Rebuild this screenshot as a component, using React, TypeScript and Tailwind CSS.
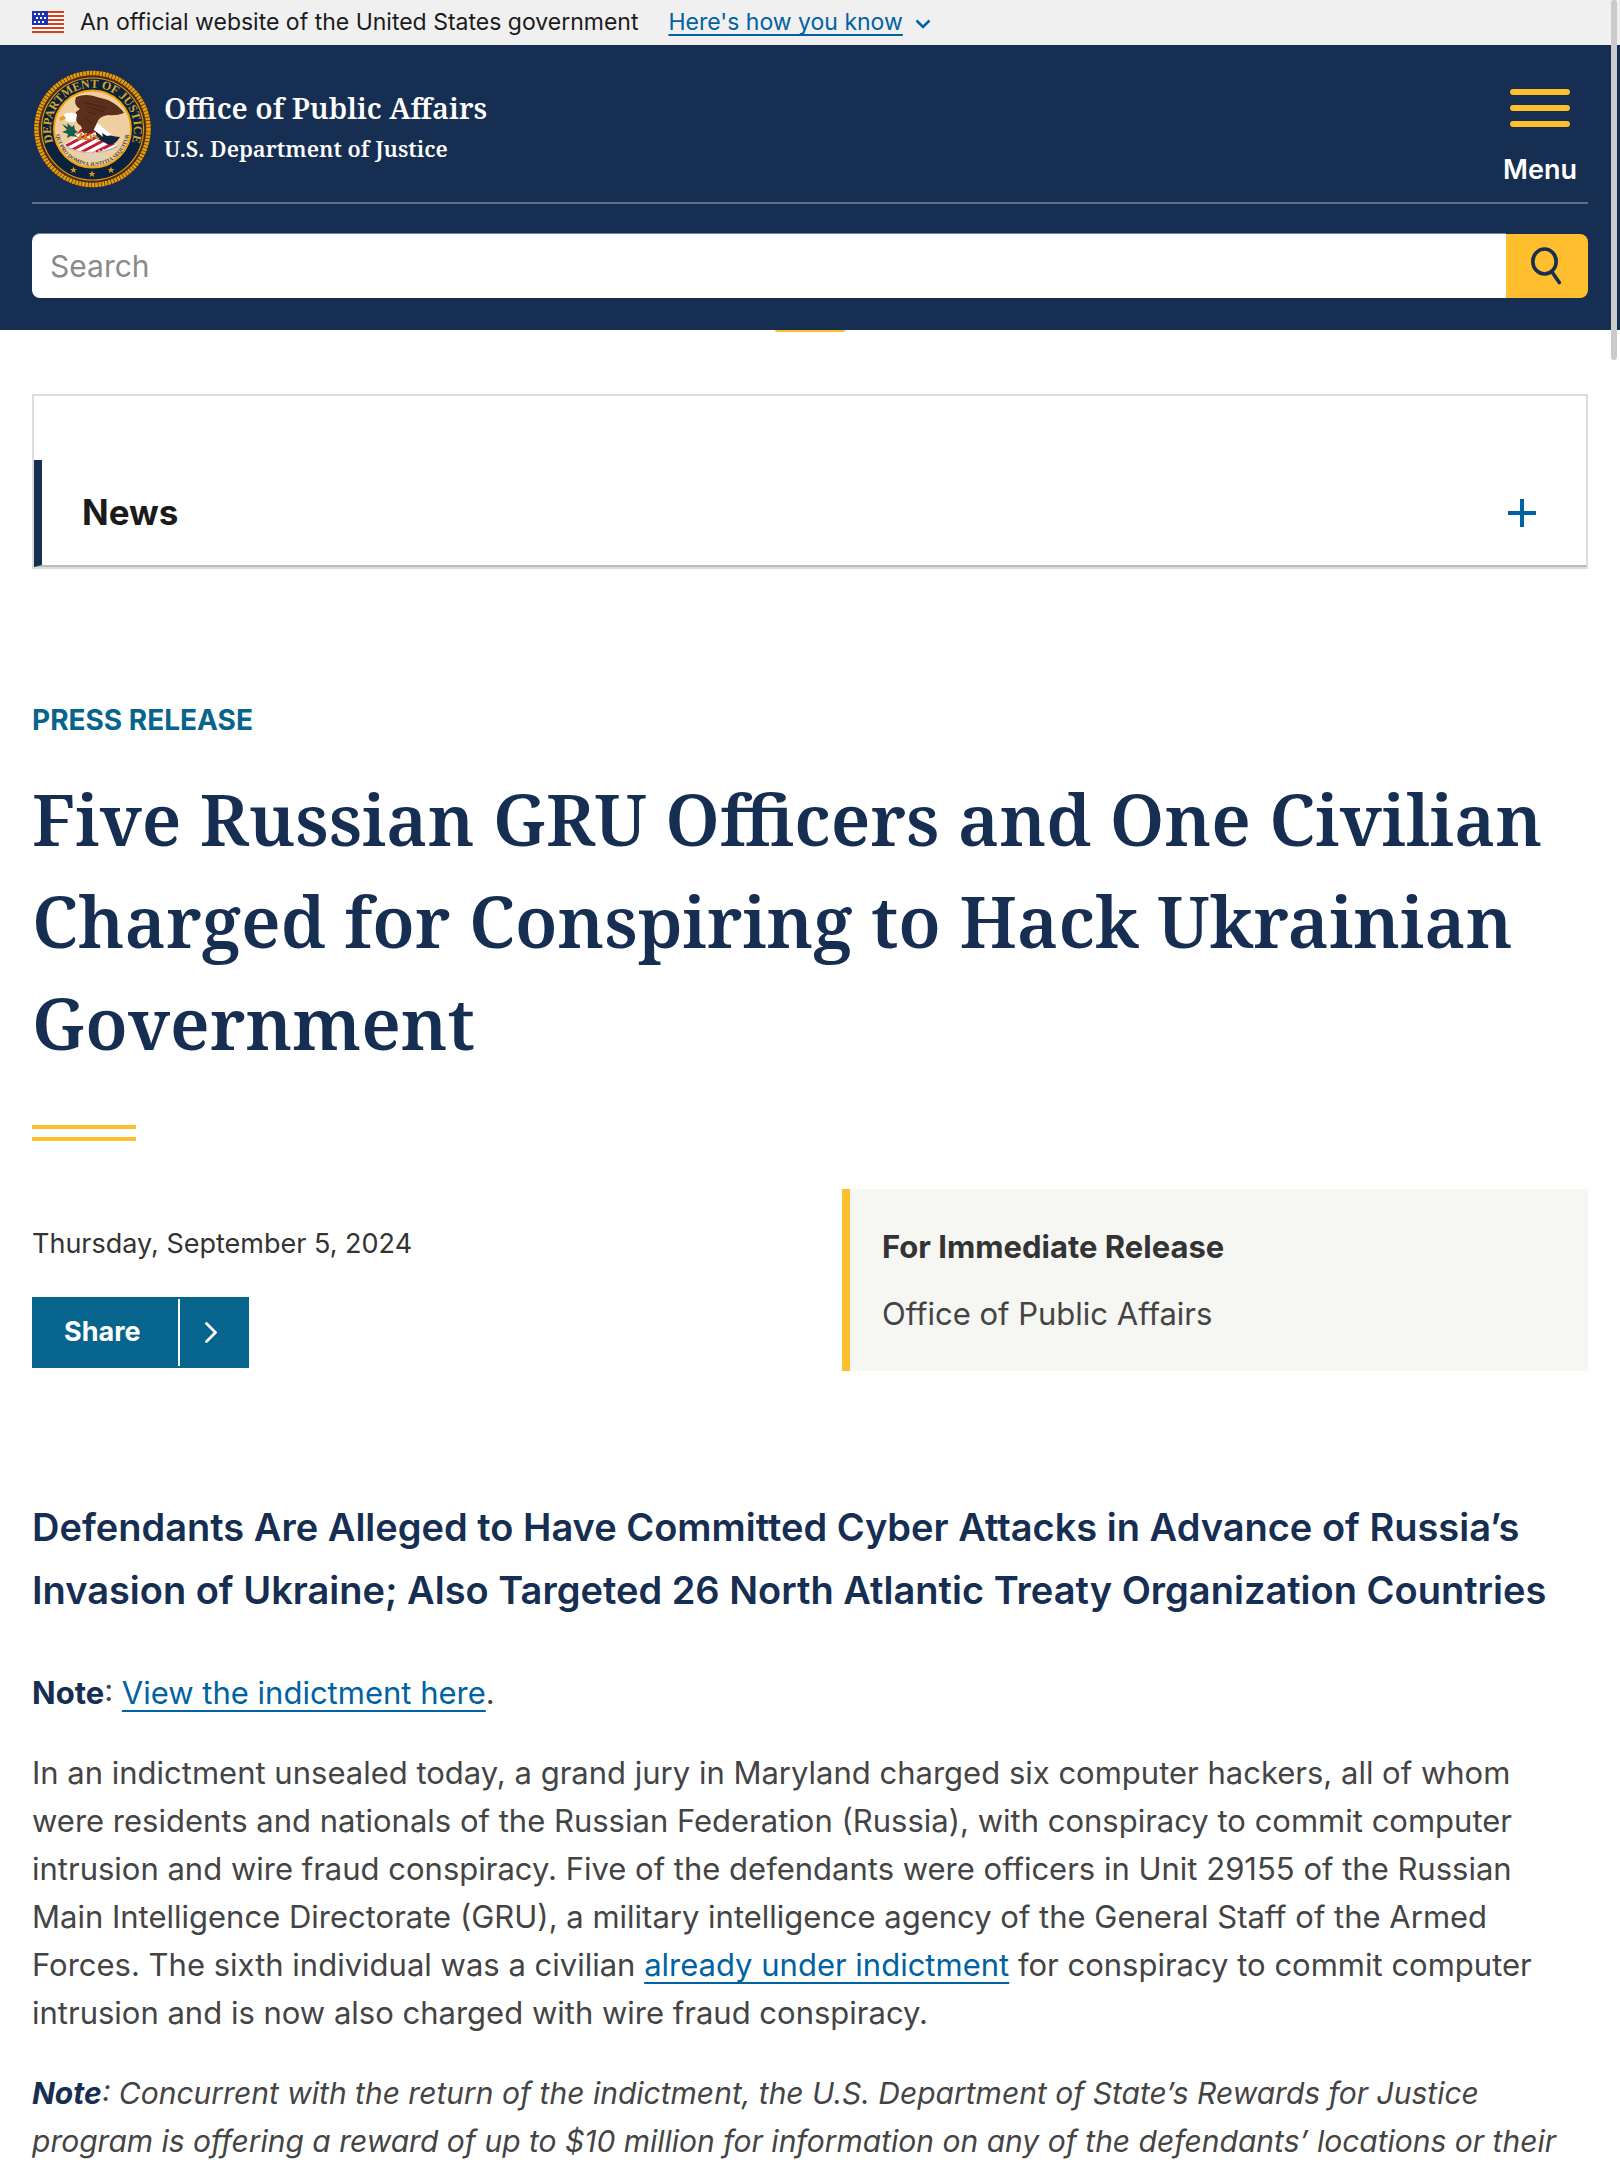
import type { ReactNode } from "react";

const NAVY = "#162e51";
const GOLD = "#ffbe2e";

function Flag() {
  const stripes = [0, 4, 8, 12, 16, 20];
  const stars = [
    [2, 2], [6, 2], [10, 2],
    [4, 6], [8, 6], [12, 6],
    [2, 10], [6, 10], [10, 10],
  ];
  return (
    <svg width="32" height="22" viewBox="0 0 32 22" shapeRendering="crispEdges" aria-hidden="true">
      <rect width="32" height="22" fill="#fff" />
      {stripes.map((y) => (
        <rect key={y} y={y} width="32" height="2" fill="#db3e1f" />
      ))}
      <rect width="16" height="14" fill="#1e33b1" />
      {stars.map(([x, y]) => (
        <rect key={`${x}-${y}`} x={x} y={y} width="2" height="2" fill="#fff" />
      ))}
    </svg>
  );
}

function Star({ x, y }: { x: number; y: number }) {
  return (
    <path
      transform={`translate(${x} ${y})`}
      d="M0-3.6 1-1.1 3.5-1.1 1.5.5 2.2 3 0 1.5-2.2 3-1.5.5-3.5-1.1-1-1.1Z"
      fill="#d9961a"
    />
  );
}

function Seal() {
  return (
    <svg width="120" height="120" viewBox="0 0 120 120" role="img" aria-label="Department of Justice seal">
      <defs>
        <path id="seal-outer" d="M30.8 89 A41.500 41.500 0 1 1 90.2 89" />
        <path id="seal-inner" d="M25 50 A36.900 36.900 0 1 0 96 50" />
        <clipPath id="seal-shield">
          <path d="M32 76 Q46 68 50 56 Q66 60 72 69 L85 76 Q74 85 56 83 Q41 82 32 76Z" />
        </clipPath>
      </defs>
      <circle cx="60.500" cy="60" r="58.500" fill="#4a2f1c" />
      <circle cx="60.500" cy="60" r="56" fill="none" stroke="#e89b08" strokeWidth="4.500" strokeDasharray="2.600 0.700" />
      <circle cx="60.500" cy="60" r="51" fill="#0b2140" stroke="#e0950c" strokeWidth="1.200" />
      <circle cx="60.500" cy="60" r="38.500" fill="#efcf9f" stroke="#f0a30a" strokeWidth="2" />
      <text fill="#d9a625" fontFamily="Liberation Serif, serif" fontSize="12">
        <textPath href="#seal-outer" startOffset="50%" textAnchor="middle">DEPARTMENT OF JUSTICE</textPath>
      </text>
      <g clipPath="url(#seal-shield)">
        <rect x="28" y="50" width="62" height="36" fill="#fff" />
        <g stroke="#c8193c" strokeWidth="3">
          <path d="M28 66 52 54M28 73 58 57M34 77 66 60M40 81 72 64M48 84 80 67M58 86 88 71" />
        </g>
      </g>
      <path d="M32 75Q56 92 87 76L84 79Q60 89 38 80Z" fill="#a9a9ad" />
      <g stroke="#d5d2cf" strokeWidth="1.600" fill="none">
        <path d="M55 83 53 90M59 82 58 92M63 82 64 93M67 81 69 92M71 80 74 89M54 87 74 90" />
      </g>
      <path d="M61 57Q68 66 88 68Q83 76 77 76L66 70Z" fill="#12233f" />
      <path d="M63 52Q70 58 80 66L75 67 70 64 71 68 62 61Z" fill="#fff" />
      <path d="M44 28Q54 24 65 28L76 31Q88 37 92 44Q84 47 76 46Q67 47 65 54L60 64 51 64 49 57Q42 53 44 43L48 40Q41 36 44 28Z" fill="#5a2f1b" />
      <path d="M51 33 74 39M54 37 72 43M56 43 64 45M53 49 60 55" stroke="#442013" strokeWidth="1" />
      <path d="M45 45Q36 42 31 46L28 50 33 51Q37 55 44 52Z" fill="#fff" />
      <path d="M32 46 27 49 28 52 34 50Z" fill="#e2a22c" />
      <path d="M30 55 36 58 35 54 40 58 42 56 43 61 46 63 42 65 46 68 39 67 35 69 36 65 30 63 35 61Z" fill="#15604a" />
      <path d="M50 64 46 71M53 64 54 71M58 65 60 71M61 66 67 70M45 69 57 70" stroke="#d28a18" strokeWidth="2.200" fill="none" />
      <text fill="#4c4335" fontFamily="Liberation Serif, serif" fontSize="5.500">
        <textPath href="#seal-inner" startOffset="50%" textAnchor="middle">QUI PRO DOMINA JUSTITIA SEQUITUR</textPath>
      </text>
      <Star x={41.5} y={101} />
      <Star x={60} y={105} />
      <Star x={79} y={101} />
    </svg>
  );
}

function MenuIcon() {
  return (
    <span className="flex flex-col gap-2.5" aria-hidden="true">
      <span className="h-1.5 w-15 rounded-full bg-[#ffbe2e]" />
      <span className="h-1.5 w-15 rounded-full bg-[#ffbe2e]" />
      <span className="h-1.5 w-15 rounded-full bg-[#ffbe2e]" />
    </span>
  );
}

function BodyLink({ children }: { children: ReactNode }) {
  return (
    <a href="#" className="text-[#0062a3] underline decoration-2 underline-offset-[6px]">
      {children}
    </a>
  );
}

export default function App() {
  return (
    <div className="relative bg-white font-['Inter',sans-serif] text-[#444]">
      <section aria-label="Official government website" className="flex h-[45px] items-center bg-[#f0f0f0] px-8 pb-px text-[23px] text-[#1b1b1b]">
        <Flag />
        <span className="ml-4">An official website of the United States government</span>
        <button type="button" className="ml-[30px] flex items-center gap-3 text-[#0062a3]">
          <span className="underline decoration-2 underline-offset-4 [text-decoration-skip-ink:none]">Here's how you know</span>
          <svg width="16" height="10" viewBox="0 0 16 10" fill="none" stroke="currentColor" strokeWidth="2.500" className="mt-1" aria-hidden="true">
            <path d="m1.500 1.500 6.500 6.500 6.500-6.500" />
          </svg>
        </button>
      </section>

      <header className="relative bg-[#162e51] px-8 pb-8 text-white">
        <div className="flex justify-between border-b-2 border-[#5c6d85] pt-6 pb-[13px]">
          <a href="#" className="flex items-center gap-3 font-['Noto_Serif',serif] font-semibold">
            <Seal />
            <span className="flex flex-col pb-0.5">
              <span className="text-[29px] leading-[40px]">Office of Public Affairs</span>
              <span className="text-[22px] leading-[40px]">U.S. Department of Justice</span>
            </span>
          </a>
          <button type="button" className="flex w-24 flex-col items-center gap-6 pt-5 text-[27px] leading-[38px] font-semibold">
            <MenuIcon />
            Menu
          </button>
        </div>
        <form className="mt-[29px] flex h-[65px]" onSubmit={(e) => e.preventDefault()}>
          <input
            type="search"
            aria-label="Search"
            placeholder="Search"
            className="min-w-0 flex-1 rounded-l-lg border-t border-[#71829b] bg-white px-[18px] text-[30px] text-[#1b1b1b] placeholder:text-[#8a8a8a]"
          />
          <button type="submit" aria-label="Submit search" className="mt-px flex w-[82px] items-center justify-center rounded-r-lg bg-[#ffbe2e] pr-0.5">
            <svg width="32" height="38" viewBox="0 0 32 38" fill="none" stroke={NAVY} strokeWidth="3.600" strokeLinecap="round" aria-hidden="true">
              <ellipse cx="14.500" cy="14.500" rx="11.700" ry="12.500" />
              <path d="m22 25 7.300 10.500" />
            </svg>
          </button>
        </form>
        <span className="absolute top-full left-1/2 h-0.5 w-[70px] -translate-x-1/2 rounded-b bg-[#ffbe2e]" />
      </header>

      <main className="px-8">
        <nav aria-label="Section" className="mt-16 border-2 border-[#dcdcdc] pt-16">
          <button type="button" className="flex w-full items-center justify-between border-b-2 border-l-8 border-b-[#bababa] border-l-[#162e51] py-[26px] pr-[50px] pl-10 text-[35px] leading-[53px] font-bold text-[#1b1b1b]">
            News
            <svg width="28" height="28" viewBox="0 0 28 28" stroke="#0062a3" strokeWidth="4" aria-hidden="true">
              <path d="M14 0v28M0 14h28" />
            </svg>
          </button>
        </nav>

        <p className="mt-[133px] text-[28px] leading-[36px] font-bold text-[#07648d]">PRESS RELEASE</p>
        <h1 className="mt-[30px] font-['Noto_Serif',serif] text-[71px] leading-[102px] font-semibold text-[#162e51]">
          Five Russian GRU Officers and One Civilian
          <br />
          Charged for Conspiring to Hack Ukrainian
          <br />
          Government
        </h1>
        <svg width="104" height="16" viewBox="0 0 104 16" className="mt-[51px]" aria-hidden="true">
          <path d="M0 2h104M0 14h104" stroke={GOLD} strokeWidth="4" />
        </svg>

        <div className="mt-12 grid grid-cols-[810fr_746fr]">
          <div className="pt-[35px]">
            <time dateTime="2024-09-05" className="block text-[27px] leading-[40px] text-[#333]">Thursday, September 5, 2024</time>
            <button type="button" className="mt-[33px] flex h-[71px] items-stretch bg-[#07648d] py-0.5 text-[27px] font-bold text-white">
              <span className="flex w-[148px] items-center border-r-2 border-white pl-8">Share</span>
              <span className="flex w-[69px] items-center justify-center pr-2">
                <svg width="14" height="22" viewBox="0 0 14 22" fill="none" stroke="currentColor" strokeWidth="2.800" strokeLinecap="round" strokeLinejoin="round" aria-hidden="true">
                  <path d="m2.500 1.500 9 9-9 9" />
                </svg>
              </span>
            </button>
          </div>
          <aside className="border-l-8 border-[#ffbe2e] bg-[#f6f6f2] pt-[34px] pb-[33px] pl-8 text-[31px] leading-[48px]">
            <h2 className="font-bold text-[#333]">For Immediate Release</h2>
            <p className="mt-[19px]">Office of Public Affairs</p>
          </aside>
        </div>

        <article className="text-[31px] leading-[48px]">
          <h2 className="mt-[125px] text-[38px] leading-[63px] font-semibold text-[#162e51]">
            Defendants Are Alleged to Have Committed Cyber Attacks in Advance of Russia’s
            <br />
            Invasion of Ukraine; Also Targeted 26 North Atlantic Treaty Organization Countries
          </h2>
          <p className="mt-[47px]">
            <strong className="text-[#162e51]">Note</strong>: <BodyLink>View the indictment here</BodyLink>.
          </p>
          <p className="mt-8">
            In an indictment unsealed today, a grand jury in Maryland charged six computer hackers, all of whom
            <br />
            were residents and nationals of the Russian Federation (Russia), with conspiracy to commit computer
            <br />
            intrusion and wire fraud conspiracy. Five of the defendants were officers in Unit 29155 of the Russian
            <br />
            Main Intelligence Directorate (GRU), a military intelligence agency of the General Staff of the Armed
            <br />
            Forces. The sixth individual was a civilian <BodyLink>already under indictment</BodyLink> for conspiracy to commit computer
            <br />
            intrusion and is now also charged with wire fraud conspiracy.
          </p>
          <p className="mt-8 text-[30px] italic">
            <strong className="text-[#162e51]">Note</strong>: Concurrent with the return of the indictment, the U.S. Department of State’s Rewards for Justice
            <br />
            program is offering a reward of up to $10 million for information on any of the defendants’ locations or their
          </p>
        </article>
      </main>

      <div className="absolute top-0 right-[3px] h-[360px] w-1.5 rounded-full bg-[#cbcbcb]" aria-hidden="true" />
    </div>
  );
}
